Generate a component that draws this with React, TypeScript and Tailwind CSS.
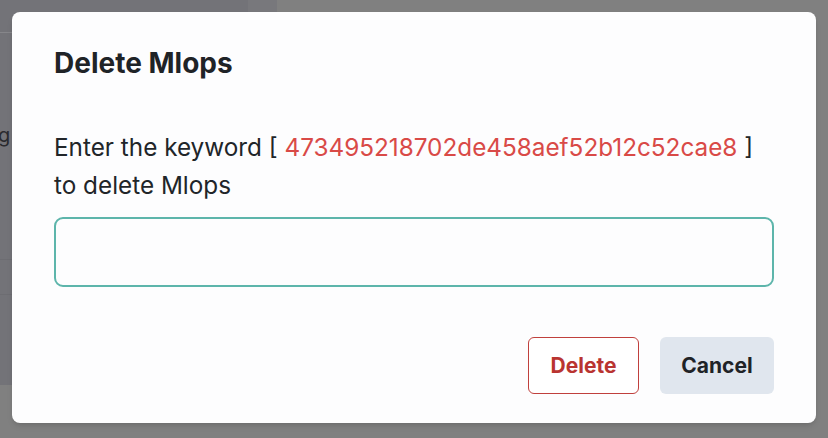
import React from "react";

const font = { fontFamily: "Inter, 'Noto Sans', sans-serif" };

const KEYWORD = "473495218702de458aef52b12c52cae8";

const BackgroundPage: React.FC = () => (
  <div className="flex h-[438px] w-full bg-[#808080]">
    {/* dimmed sidebar under the overlay */}
    <div className="flex h-[385px] w-[277px]">
      <div className="flex w-[248px] flex-col bg-[#737378]">
        <div className="h-[33px] border-b border-[#86868a]" />
        <div className="flex h-[124px] items-end overflow-hidden pb-[10px] text-[20px] leading-[24px] text-[#2a2a2e]">
          <span className="-ml-[2px]">g</span>
        </div>
        <div className="h-[103px] border-b border-[#6d6d72]" />
        <div className="h-[35px] border-b border-[#6d6d72]" />
      </div>
      <div className="w-[29px] bg-[#78787c]" />
    </div>
    <div className="flex-1" />
  </div>
);

const DeleteDialog: React.FC = () => (
  <div className="w-[804px] rounded-[8px] bg-[#fdfdfe] px-[42px] pb-[29px] pt-[34px] shadow-md">
    <h2 className="text-[28px] font-bold leading-[34px] text-[#1f2327]">
      Delete Mlops
    </h2>

    <p className="mt-[48px] text-[24.3px] leading-[38px] text-[#212529]">
      Enter the keyword [ <span className="text-[#d94a47]">{KEYWORD}</span> ]
      <br />
      to delete Mlops
    </p>

    <input
      type="text"
      className="mt-[13px] block h-[70px] w-full rounded-[9px] border-2 border-[#5db5ab] bg-transparent px-4 text-[24px] outline-none"
    />

    <div className="mt-[50px] flex justify-end gap-[21px]">
      <button className="h-[57px] w-[111px] rounded-[6px] border border-[#c0403d] bg-white text-[21px] font-bold text-[#b93431]">
        Delete
      </button>
      <button className="h-[57px] w-[114px] rounded-[6px] bg-[#e0e6ee] text-[21px] font-bold text-[#1f2327]">
        Cancel
      </button>
    </div>
  </div>
);

export default function App() {
  return (
    <div className="relative h-[438px] w-[828px] overflow-hidden" style={font}>
      <BackgroundPage />
      <div className="absolute inset-0 flex items-start justify-center pt-[12px]">
        <DeleteDialog />
      </div>
    </div>
  );
}
